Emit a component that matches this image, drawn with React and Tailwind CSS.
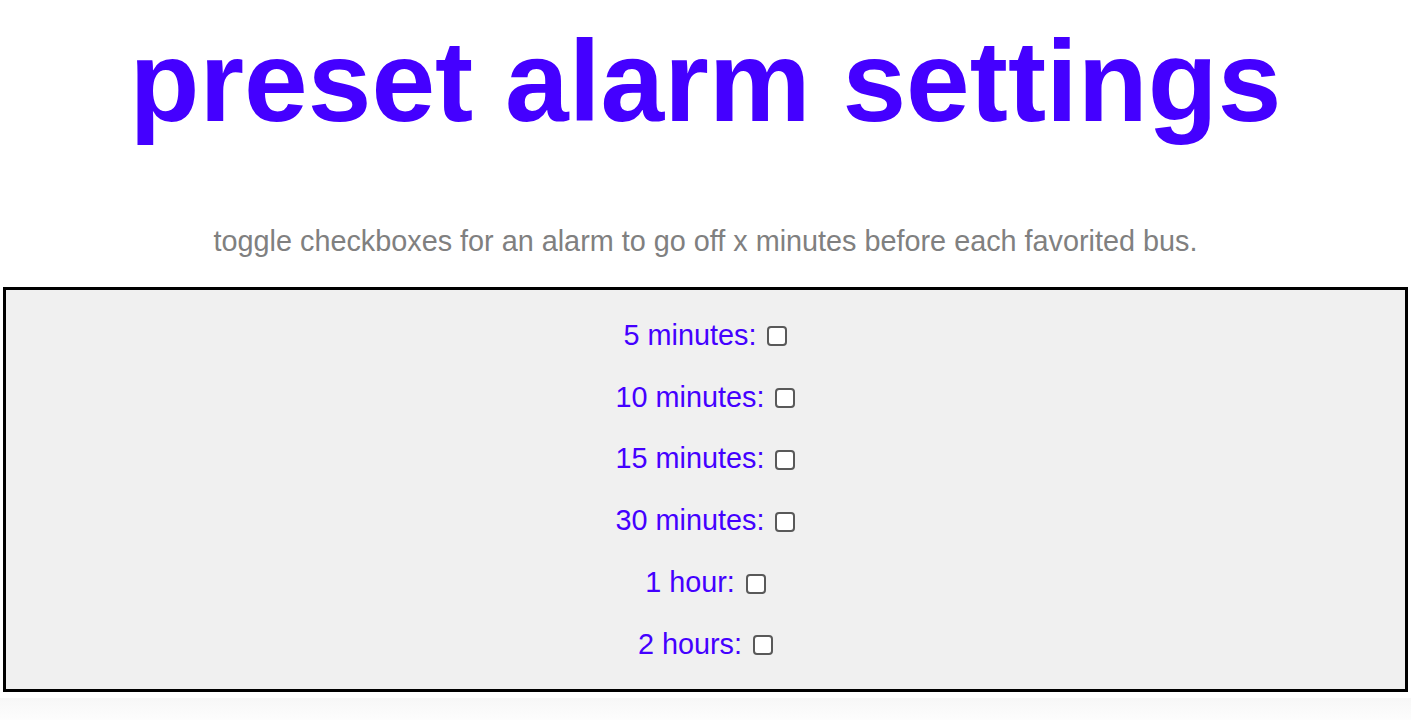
import React from "react";

const items = ["5 minutes:", "10 minutes:", "15 minutes:", "30 minutes:", "1 hour:", "2 hours:"];

export default function App() {
  return (
    <div className="min-h-[720px] bg-white font-['Liberation_Sans',Arial,sans-serif] overflow-hidden">
      <h1 className="pt-[16px] mb-[77px] text-center text-[114.5px] leading-[1.149] font-bold text-[#4400ff]">
        preset alarm settings
      </h1>
      <p className="mb-[29px] text-center text-[28.8px] leading-[1.149] text-[#808080]">
        toggle checkboxes for an alarm to go off x minutes before each favorited bus.
      </p>
      <div className="mx-[3px] border-[3px] border-black bg-[#f0f0f0] pt-[29px] pb-[28px] flex flex-col gap-[28.8px]">
        {items.map((t) => (
          <p key={t} className="text-center text-[28.8px] leading-[1.149] text-[#4400ff]">
            {t}{" "}
            <span className="inline-block align-middle ml-[3px] w-[20px] h-[20px] rounded-[4px] border-2 border-[#595959] bg-white relative -top-[1px]" />
          </p>
        ))}
      </div>
      <div className="mt-[6px] h-[30px] bg-gradient-to-b from-[#f7f7f7] to-white" />
    </div>
  );
}
